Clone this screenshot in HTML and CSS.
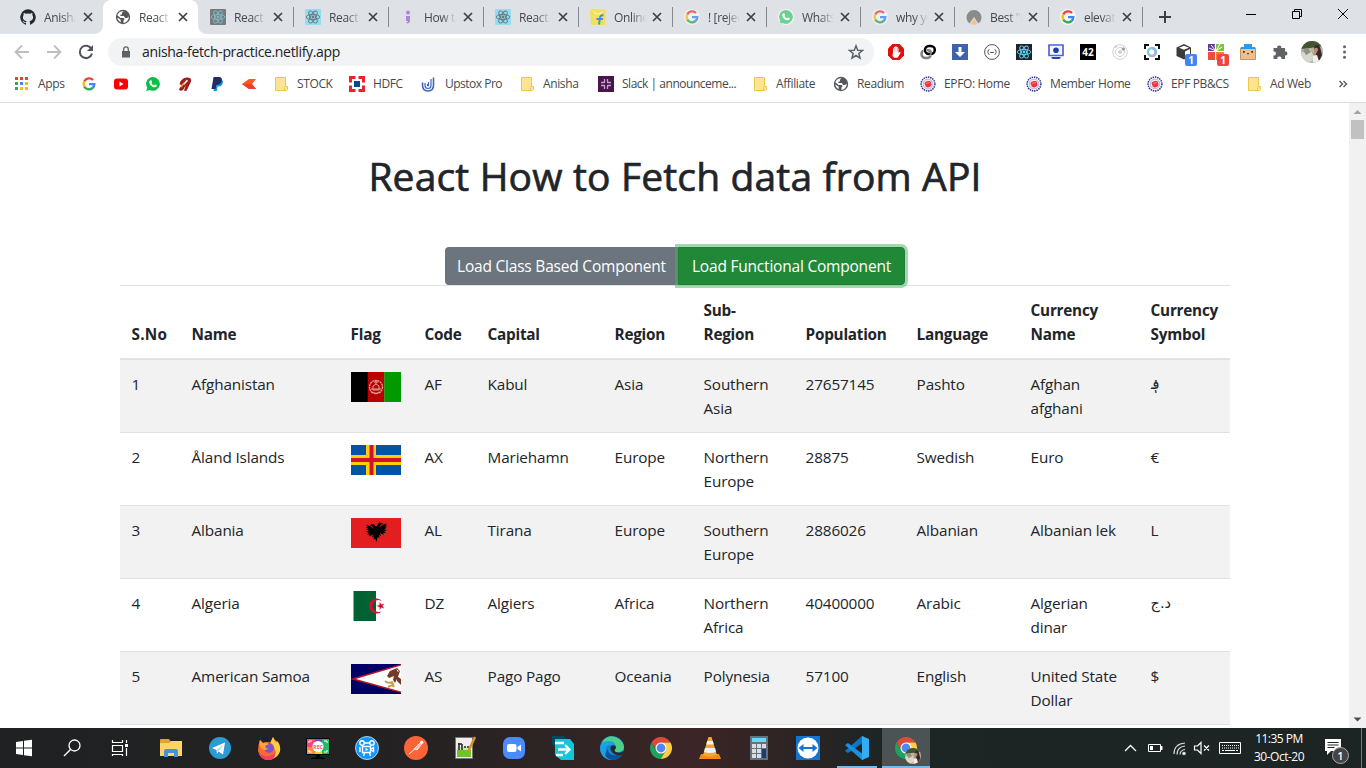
FILE: index.html
```html
<!DOCTYPE html>
<html lang="en">
<head>
<meta charset="utf-8">
<title>React How to Fetch data from API</title>
<link rel="stylesheet" href="styles.css">
</head>
<body>
<svg class="defs" width="0" height="0">
  <symbol id="google" viewBox="0 0 16 16"><g fill="none" stroke-width="2.4"><path stroke="#ea4335" d="M3.2 5.5A5.4 5.4 0 0 1 12 4"/><path stroke="#fbbc05" d="M3.3 10.6a5.3 5.3 0 0 1-.1-5.1"/><path stroke="#34a853" d="M11.6 12A5.4 5.4 0 0 1 3.3 10.6"/><path stroke="#4285f4" d="M8 8.1h5.3a5.3 5.3 0 0 1-1.8 4"/></g></symbol>
  <symbol id="react" viewBox="0 0 16 16"><g fill="none" stroke="currentColor" stroke-width=".9"><ellipse cx="8" cy="8" rx="6.8" ry="2.6"/><ellipse cx="8" cy="8" rx="6.8" ry="2.6" transform="rotate(60 8 8)"/><ellipse cx="8" cy="8" rx="6.8" ry="2.6" transform="rotate(120 8 8)"/></g><circle cx="8" cy="8" r="1.400" fill="currentColor"/></symbol>
  <symbol id="globe" viewBox="0 0 16 16"><circle cx="8" cy="8" r="7.200" fill="#54585c"/><path fill="#fff" d="M8.600 2.200 7 3.800v1.700H5.400v1.400h3.500l1.200 2.200H12l1.800-1.600c0 4-3 6.400-5.400 6.400v-2.200l1.300-1.600L8.500 8.900H5.600L2.300 6.200C3.100 3.700 5.400 2 8.600 2.200zM2.400 8.600l3.300 2.200v2.500c-2-.9-3.200-2.700-3.300-4.700z"/></symbol>
  <symbol id="whatsapp" viewBox="0 0 16 16"><path fill="currentColor" d="M8 1a6.900 6.900 0 1 1-3.300 13L1.200 15l1-3.400A6.900 6.900 0 0 1 8 1z"/><path fill="#fff" d="M5.600 4.300c.6-.3.900 0 1.400 1.400.2.500-.5.900-.6 1.200.6 1.200 1.500 2 2.700 2.500.5-.2.800-1.100 1.300-.9l1.400.8c.3.900-.8 2-1.800 2-3 0-6-3-5.800-5.400.1-.7.700-1.300 1.400-1.600z"/></symbol>
  <symbol id="folder" viewBox="0 0 16 16"><path d="M2.500 1.500h10v9h2v3l-1 1h-11z" fill="#fde492" stroke="#ecc74c"/><path d="M11.500 14v-2.500l1-1" fill="none" stroke="#ecc74c"/></symbol>
  <symbol id="seal" viewBox="0 0 16 16"><circle cx="8" cy="8" r="6.900" fill="#fff" stroke="#26358c" stroke-width="1.500" stroke-dasharray="1.500 .8"/><circle cx="8" cy="8" r="4.900" fill="#fbe3e6" stroke="#929cd4" stroke-width=".7"/><path d="M4.500 7c1-2 5-3 6.500-1l.5 3c-1 2.500-5 3.500-6 1z" fill="#ee3342"/><path d="m6 7.500 4-1" stroke="#f6a5ad" stroke-width=".7"/></symbol>
  <symbol id="close" viewBox="0 0 10 10"><path d="m1 1 8 8M9 1 1 9" stroke="#3c4043" stroke-width="1.700"/></symbol>
  <symbol id="chrome" viewBox="0 0 24 24"><path fill="#de4a3c" d="M2.500 6.500A11 11 0 0 1 21.500 6.500H12l-4.500 8z"/><path fill="#1da260" d="m2.500 6.500 4.700 8.300L12 17.500l4.500-2.700L11.800 23A11 11 0 0 1 2.500 6.500z"/><path fill="#ffcd45" d="M12 6.500h9.500A11 11 0 0 1 11.800 23l4.700-8.200z"/><circle cx="12" cy="12" r="5.500" fill="#fff"/><circle cx="12" cy="12" r="4.400" fill="#4a8af4"/></symbol>
</svg>

<header class="tabs">
  <div class="tab"><svg viewBox="0 0 16 16"><path fill="#24292e" d="M8 .2a8 8 0 0 0-2.500 15.500c.4.100.5-.2.500-.400v-1.500c-2 .4-2.600-.6-2.800-1.100-.2-.4-.6-.9-.9-1 .9-.2 1.400.5 1.600.900.600.900 1.500.700 2.200.500.100-.500.300-.8.500-1-1.800-.2-3.700-.9-3.700-4 0-.8.300-1.600.8-2.100-.2-.5-.300-1.300.1-2.100 0 0 .7-.2 2.200.8a7.500 7.500 0 0 1 4 0c1.500-1 2.200-.8 2.200-.8.400.8.200 1.600.100 2.100.5.600.8 1.300.8 2.100 0 3.100-1.900 3.800-3.700 4 .300.300.600.8.600 1.500v1.700c0 .2.100.5.5.4A8 8 0 0 0 8 .2z"/></svg><span>Anisha</span><svg class="x"><use href="#close"/></svg></div>
  <div class="tab active"><svg><use href="#globe"/></svg><span>React A</span><svg class="x"><use href="#close"/></svg></div>
  <div class="tab nosep"><svg class="react-gray"><use href="#react"/></svg><span>React -</span><svg class="x"><use href="#close"/></svg></div>
  <div class="tab"><svg class="react-blue"><use href="#react"/></svg><span>React |</span><svg class="x"><use href="#close"/></svg></div>
  <div class="tab"><svg viewBox="0 0 16 16"><circle cx="8" cy="3.500" r="1.900" fill="#b083d6"/><path d="M6 7h4v4.500c0 2-1 3-3.500 3v-1.300c1 0 1.400-.5 1.400-1.200H6z" fill="#b083d6"/></svg><span>How to</span><svg class="x"><use href="#close"/></svg></div>
  <div class="tab"><svg class="react-blue"><use href="#react"/></svg><span>React |</span><svg class="x"><use href="#close"/></svg></div>
  <div class="tab narrow"><svg viewBox="0 0 16 16"><path fill="#f2df5c" d="M0 2 1 0l14 .500L16 2l-1 14H1z"/><path d="M3.500 2.500Q5 5 8 5t4.500-2.500" fill="none" stroke="#fff8b0" stroke-width="1.200"/><path d="M13.500 6.300c-2.500-.5-3.300.7-3.600 3L9 15.500M6.500 10h6.500" fill="none" stroke="#4a90d8" stroke-width="2"/></svg><span>Online</span><svg class="x"><use href="#close"/></svg></div>
  <div class="tab narrow"><svg class="disc dim"><use href="#google"/></svg><span>! [rejec</span><svg class="x"><use href="#close"/></svg></div>
  <div class="tab narrow"><svg class="disc wa-dim"><use href="#whatsapp"/></svg><span>Whats</span><svg class="x"><use href="#close"/></svg></div>
  <div class="tab narrow"><svg class="disc dim"><use href="#google"/></svg><span>why yo</span><svg class="x"><use href="#close"/></svg></div>
  <div class="tab narrow"><svg viewBox="0 0 16 16"><path fill="#8b8b8b" d="M3.500 14.500a7.500 7.500 0 1 1 9 0L8 8z"/><path fill="#f0c48f" d="m8 9 3.500 5.800q-3.500 1.700-7 0z"/></svg><span>Best "F</span><svg class="x"><use href="#close"/></svg></div>
  <div class="tab narrow last"><svg class="disc"><use href="#google"/></svg><span>elevate</span><svg class="x"><use href="#close"/></svg></div>
  <svg class="plus" viewBox="0 0 14 14"><path d="M7 1v12M1 7h12" stroke="#3c4043" stroke-width="2"/></svg>
  <div class="window">
    <svg viewBox="0 0 12 12"><path d="M1 6.500h10" stroke="#000"/></svg>
    <svg viewBox="0 0 12 12"><path d="M1.500 3.500h7v7h-7zM3.500 3.500v-2h7v7h-2" fill="none" stroke="#000"/></svg>
    <svg viewBox="0 0 12 12"><path d="m1 1 10 10M11 1 1 11" stroke="#000"/></svg>
  </div>
</header>

<nav class="toolbar">
  <svg viewBox="0 0 16 16"><path d="M15 8H2M8 1.500 1.500 8 8 14.500" fill="none" stroke="#bcbec1" stroke-width="1.800"/></svg>
  <svg viewBox="0 0 16 16"><path d="M1 8h13M8 1.500 14.500 8 8 14.500" fill="none" stroke="#bcbec1" stroke-width="1.800"/></svg>
  <svg viewBox="0 0 16 16"><path d="M13.500 5A6.200 6.200 0 1 0 14 9.500" fill="none" stroke="#505357" stroke-width="2"/><path d="M15 1v6H9z" fill="#505357"/></svg>
  <div class="omnibox">
    <svg class="lock" viewBox="0 0 10 12"><path d="M1 5h8v6.500H1z" fill="#5f6368"/><path d="M2.700 5V3.200a2.300 2.300 0 0 1 4.600 0V5" fill="none" stroke="#5f6368" stroke-width="1.300"/></svg>
    <span class="url">anisha-fetch-practice.netlify.app</span>
    <svg class="star" viewBox="0 0 16 16"><path d="m8 1.800 1.700 4.400 4.700.3-3.600 3 1.200 4.600-4-2.600-4 2.600 1.200-4.600-3.600-3 4.700-.3z" fill="none" stroke="#5f6368" stroke-width="1.500"/></svg>
  </div>
  <div class="extensions">
    <svg viewBox="0 0 16 16"><path fill="#e1100c" d="M4.500 0h7L16 4.500v7L11.500 16h-7L0 11.500v-7z"/><path fill="#fff" d="M5 8V4.300h1V3h1.200v-.8h1.300V3h1.200v1.200h.8V9l1.500-1.200.7.700-2 3.500-1.200 1.700H6L4.500 12z"/><path d="M6.300 4v3.500M8 3.500v4M9.500 4v3.500" stroke="#e1100c" stroke-width=".3"/></svg>
    <svg viewBox="0 0 16 16" fill="none"><rect x="1.500" y="6" width="9.500" height="8" rx="4" stroke="#808080" stroke-width="2.500"/><rect x="5" y="2" width="9.800" height="8" rx="4" stroke="#fff" stroke-width="3.600"/><rect x="5" y="2" width="9.800" height="8" rx="4" stroke="#000" stroke-width="2.500"/><path d="M8.500 6.500H10q1.500 1.500.5 4.500" stroke="#808080" stroke-width="2"/></svg>
    <svg viewBox="0 0 16 16"><path fill="#3f62ad" d="M0 0h16v16H0z"/><path fill="#fff" d="M6.500 3h3v5H13l-5 5-5-5h3.500z"/></svg>
    <svg viewBox="0 0 16 16"><circle cx="8" cy="8" r="7.400" fill="#fff" stroke="#555"/><path d="M5.500 5.500Q4 5.500 4.300 7L3.500 8l.8 1q-.3 1.500 1.200 1.500M10.500 5.500q1.500 0 1.200 1.500l.8 1-.8 1q.3 1.500-1.200 1.500M6 8.500h4" fill="none" stroke="#555" stroke-width=".9" stroke-dasharray="none"/></svg>
    <svg class="react-ext"><use href="#react"/></svg>
    <svg viewBox="0 0 16 16"><path d="M1 1h14v10.500H1z" fill="#f5f6ff" stroke="#5560dc" stroke-width="1.700"/><circle cx="8" cy="6.300" r="2.800" fill="#1c3fa5"/><path d="M3.500 13h9v1.500l-2 .500h-5l-2-.5z" fill="#2542a8"/></svg>
    <span class="forty-two">42</span>
    <svg viewBox="0 0 16 16" fill="none" stroke="#d0d0d0"><circle cx="8" cy="8" r="7.300"/><circle cx="8" cy="8" r="4.500"/><circle cx="8" cy="8" r="1.500" fill="#d0d0d0"/><circle cx="11.300" cy="5" r="1.200" fill="#999" stroke="#999"/><circle cx="3.800" cy="2.500" r=".8" fill="#aaa"/></svg>
    <svg viewBox="0 0 16 16" fill="none"><path d="M1 5V1h4M11 1h4v4M15 11v4h-4M5 15H1v-4" stroke="#111" stroke-width="2"/><circle cx="8" cy="8" r="4" stroke="#7fd0c9" stroke-width="2.400"/><path d="M8 4a4 4 0 0 1 3 6" stroke="#8fb5e5" stroke-width="2.400"/><path d="M11 10.500a4 4 0 0 1-5 1" stroke="#c3a7e2" stroke-width="2.400"/></svg>
    <div class="badged"><svg viewBox="0 0 16 16"><path d="M.5 3.500 8 0l7 3.500v8.500L8 15.500.5 12z" fill="#3c3c3c"/><path d="M3 3.700 8 1.700l5 2-5 2z" fill="#fff"/><path d="m9 7.500 5-2.500v6.500L9 14z" fill="#fff"/></svg><b>1</b></div>
    <div class="badged red"><svg viewBox="0 0 16 16"><path fill="#6237a0" d="M0 0h7v7H0z"/><path fill="#7fc241" d="M8 0h8v7H8z"/><path fill="#ee4b41" d="M0 8h7v8H0z"/><path fill="#e88237" d="M8 8h8v8H8z"/><path d="M8 7 3 1M8 7 1 4M8 7l-1-6M8 7l6-4M8 7l4-7" stroke="#fff"/></svg><b>1</b></div>
    <svg viewBox="0 0 16 16"><path fill="#edbe8e" stroke="#c39566" d="M.5 4h15v11.500H.5z"/><path fill="#2999f3" d="M4 0h8v3h3v2H1V3h3z"/><path d="M3 7h1.700v1.700H3zM11.300 7H13v1.700h-1.700z" fill="#333"/><path d="m7 9.300 1 .7 1-.7" stroke="#333" fill="none"/></svg>
    <svg viewBox="0 0 16 16"><path fill="#5f6368" d="M1.500 4h3.800a2 2 0 1 1 3.900 0H13v3.600a2 2 0 1 1 0 3.900V15H9.300a2 2 0 1 0-3.900 0H1.500v-3.600a2 2 0 1 0 0-3.900z"/></svg>
    <svg class="avatar"><use href="#photo"/></svg>
    <svg viewBox="0 0 16 16" fill="#5f6368"><circle cx="8.500" cy="2.800" r="1.500"/><circle cx="8.500" cy="8" r="1.500"/><circle cx="8.500" cy="13.200" r="1.500"/></svg>
  </div>
</nav>

<nav class="bookmarks">
  <a><svg viewBox="0 0 16 16"><path fill="#ea4335" d="M1 1h3v3H1zM6 1h3v3H6zM11 1h3v3h-3z"/><path fill="#34a853" d="M1 6h3v3H1zM1 11h3v3H1z"/><path fill="#4285f4" d="M6 6h3v3H6z"/><path fill="#fbbc05" d="M11 6h3v3h-3zM6 11h3v3H6zM11 11h3v3h-3z"/></svg><span>Apps</span></a>
  <a><svg><use href="#google"/></svg></a>
  <a><svg viewBox="0 0 16 16"><rect x="1" y="2.500" width="14" height="11" rx="3" fill="#f00"/><path fill="#fff" d="m6.500 5.500 4 2.500-4 2.500z"/></svg></a>
  <a class="wa"><svg><use href="#whatsapp"/></svg></a>
  <a><svg viewBox="0 0 16 16"><path d="M2.500 8Q4 2 10 1.500q5 0 4 4L10 14q-1 1.500-3 .5L9 9 6 14q-2 1.500-4 0 0-2 3-4.500z" fill="#9c1c1d"/><path d="m5 9 5-5.500 1 1.500L7 9z" fill="#fff"/><path d="m4 11 3-4" stroke="#f39a1d" stroke-width="1.500"/></svg></a>
  <a><svg viewBox="0 0 16 16"><path fill="#179bd7" d="M6 4h7q2 1 0 5-2 2-4.500 1.500L8 15H4.500z"/><path fill="#222d65" d="M4.500 1h6q3.500.500 2 5-1 3-5 2.800L6.500 13h-4z"/></svg></a>
  <a><svg viewBox="0 0 16 16"><path fill="#ff5722" d="M1 8 8 3h7l-4 5 4 5H8z"/><path fill="#e8432a" d="m1 8 10 0 4 5H8z"/></svg></a>
  <a><svg><use href="#folder"/></svg><span>STOCK</span></a>
  <a><svg viewBox="0 0 16 16"><path fill="#ed232a" d="M0 0h16v16H0z"/><path fill="#fff" d="M6.500 0h3v16h-3zM0 6.500h16v3H0zM3 3h10v10H3z"/><path fill="#004c8f" d="M5 5h6v6H5z"/></svg><span>HDFC</span></a>
  <a><svg viewBox="0 0 16 16" fill="none" stroke="#3f66bd"><path d="M1.500 6.500V9q0 6 5.500 6t5.500-6V1.500" stroke-width="1.600"/><path d="M4 7v2.500q0 3 3 3t3-3V3M6.500 8v1.500q.5 1 1 0V6" stroke-width="1.200"/></svg><span class="upstox">Upstox Pro</span></a>
  <a><svg><use href="#folder"/></svg><span>Anisha</span></a>
  <a><svg viewBox="0 0 16 16"><path fill="#4a154b" d="M0 0h16v16H0z"/><path d="M6.500 3v4M9.500 9v4M3 9.500h4M9 6.500h4M9.500 3v3M6.500 10v3M3 6.500h3M10 9.500h3" stroke="#c3a3c5" stroke-width="1.300"/></svg><span class="slack">Slack | announceme...</span></a>
  <a><svg><use href="#folder"/></svg><span>Affiliate</span></a>
  <a><svg><use href="#globe"/></svg><span>Readium</span></a>
  <a><svg><use href="#seal"/></svg><span>EPFO: Home</span></a>
  <a><svg><use href="#seal"/></svg><span>Member Home</span></a>
  <a><svg><use href="#seal"/></svg><span class="cs">EPF PB&amp;CS</span></a>
  <a><svg><use href="#folder"/></svg><span>Ad Web</span></a>
  <svg viewBox="0 0 10 10"><path d="m1.500 2 3 3-3 3M5.500 2l3 3-3 3" fill="none" stroke="#5f6368" stroke-width="1.500"/></svg>
</nav>

<div class="viewport">
  <main>
    <h1>React How to Fetch data from API</h1>
    <div class="btn-group"><button class="btn-secondary">Load Class Based Component</button><button class="btn-success">Load Functional Component</button></div>
    <table>
      <colgroup><col class="c1"><col class="c2"><col class="c3"><col class="c4"><col class="c5"><col class="c6"><col class="c7"><col class="c8"><col class="c9"><col class="c10"><col class="c11"></colgroup>
      <thead><tr><th>S.No</th><th>Name</th><th>Flag</th><th>Code</th><th>Capital</th><th>Region</th><th>Sub-<br>Region</th><th>Population</th><th>Language</th><th>Currency<br>Name</th><th>Currency<br>Symbol</th></tr></thead>
      <tbody>
        <tr><td>1</td><td>Afghanistan</td><td><svg viewBox="0 0 50 30"><path d="M0 0h17v30H0z"/><path fill="#b00" d="M16.700 0H33.500v30H16.700z"/><path fill="#090" d="M33.300 0H50v30H33.300z"/><g fill="none" stroke="#e0a39c"><circle cx="25" cy="15" r="6.500" stroke-width="1.300" stroke-dasharray="2 .6"/><path d="M22 18v-4l3-2 3 2v4zM20 20q5 3 10 0M23 10h4M25 8v4M20 17h10"/></g></svg></td><td>AF</td><td>Kabul</td><td>Asia</td><td>Southern<br>Asia</td><td>27657145</td><td>Pashto</td><td>Afghan<br>afghani</td><td class="ar">؋</td></tr>
        <tr><td>2</td><td>Åland Islands</td><td><svg viewBox="0 0 50 30"><path fill="#0053a5" d="M0 0h50v30H0z"/><path stroke="#ffce00" stroke-width="10" d="M20 0v30M0 15h50"/><path stroke="#d21034" stroke-width="4" d="M20.500 0v30M0 15h50"/></svg></td><td>AX</td><td>Mariehamn</td><td>Europe</td><td>Northern<br>Europe</td><td>28875</td><td>Swedish</td><td>Euro</td><td>€</td></tr>
        <tr><td>3</td><td>Albania</td><td><svg viewBox="0 0 50 30"><path fill="#e41e20" d="M0 0h50v30H0z"/><path d="m25 9-2-3-3 .5-1 1 2 .5 1.500 3-3.500-3-4-1 2 2-2 0 2 2h-2l3 2-3 .5 3 1.500-2 1.500 3 0-1 2 4-2-1 3 2-1-.5 3 2-1 .5 3.500L25 24l1-1.500.500-3.500 2 1-.500-3 2 1-1-3 4 2-1-2h3l-2-1.500 3-1.500-3-.5 3-2h-2l2-2h-2l2-2-4 1-3.500 3 1.500-3 2-.5-1-1-3-.5z"/></svg></td><td>AL</td><td>Tirana</td><td>Europe</td><td>Southern<br>Europe</td><td>2886026</td><td>Albanian</td><td>Albanian lek</td><td>L</td></tr>
        <tr><td>4</td><td>Algeria</td><td><svg viewBox="0 0 50 30"><path fill="#fff" d="M2.500 0h45v30h-45z"/><path fill="#006233" d="M2.500 0H25v30H2.500z"/><path fill="#d21034" d="M31.500 10.500a7.500 7.500 0 1 0 0 9 6 6 0 1 1 0-9z"/><path fill="#d21034" d="m28.600 11-.1 3-3.200 1 3.200 1 .1 3 1.800-2.400 2.900.8-1.800-2.400 1.800-2.400-2.900.8z"/></svg></td><td>DZ</td><td>Algiers</td><td>Africa</td><td>Northern<br>Africa</td><td>40400000</td><td>Arabic</td><td>Algerian<br>dinar</td><td class="ar">د.ج</td></tr>
        <tr><td>5</td><td>American Samoa</td><td><svg viewBox="0 0 50 30"><path fill="#006" d="M0 0h50v30H0z"/><path fill="#fff" stroke="#bd1021" stroke-width="1.500" d="M52 .2 2 15l50 13.800z"/><path fill="#733a25" d="m46 4-7 3-3 5 2 2 5-2-1 4 2 3 2-4 2-5 1-3z"/><path d="M34 17q3 3 8 1M37 23l6-3M40 18l3 5" stroke="#c3a04a" fill="none" stroke-width="2"/><path d="m45 5 3 2-1 1z" fill="#fff"/><path fill="#733a25" d="m46 12 4 3v6l-4-4z"/></svg></td><td>AS</td><td>Pago Pago</td><td>Oceania</td><td>Polynesia</td><td>57100</td><td>English</td><td>United State<br>Dollar</td><td>$</td></tr>
      </tbody>
    </table>
  </main>
  <aside class="scrollbar"><svg viewBox="0 0 17 17"><path d="m4.500 11 4-4 4 4z" fill="#a3a3a3"/></svg><i></i><svg class="down" viewBox="0 0 17 17"><path d="m4.500 6.500 4 4 4-4z" fill="#505050"/></svg></aside>
</div>

<footer class="taskbar">
  <div class="system">
    <svg viewBox="0 0 24 24"><path fill="#fff" d="m4 6 7-1v6.500H4zM12 4.800l8-1v7.700h-8zM4 12.500h7V19l-7-1zM12 12.500h8v7.700l-8-1z"/></svg>
    <svg viewBox="0 0 24 24"><circle cx="14.500" cy="9.500" r="5.500" fill="none" stroke="#fff" stroke-width="1.300"/><path d="m10.500 13.500-6.500 6.500" stroke="#fff" stroke-width="1.500"/></svg>
    <svg viewBox="0 0 24 24"><path d="M4.500 4v2.500h10V4M4.500 9.500h10v6h-10zM4.500 20v-1.500h10V20M18.500 4v3M18.500 12v8" fill="none" stroke="#fff" stroke-width="1.200"/><path fill="#fff" d="M17 8h3v3h-3z"/></svg>
  </div>
  <div class="apps">
    <div><svg viewBox="0 0 24 24"><path fill="#dda52c" d="M1 4q0-1 1-1h8l2 3h11v14H1z"/><path fill="#ffd665" d="M1 7h9l2-2h11v15H1z"/><path fill="#4594db" d="M5 21v-6q0-2 2-2h10q2 0 2 2v6h-4v-4h-6v4z"/></svg></div>
    <div><svg viewBox="0 0 24 24"><circle cx="12" cy="12" r="11" fill="#2c9bd3"/><path fill="#fff" d="m4 12 13-5.500-2 12-4.500-3L9 18l-.5-4z"/><path fill="#b8d9ea" d="m8.500 14 7-5.500-5 7z"/></svg></div>
    <div><svg viewBox="0 0 24 24"><path fill="#ff6a33" d="m3 4 3 3q4-2 8 0l2-6q2 4 5 5 3 7 1 11-4 7-10 7-9 0-11-9Q1 9 3 4z"/><path fill="#ffcf3b" d="M16 1q1 4 4 6 1-2 0-3 6 9 1 15-2 3-5 3 4-4 2-8-1-5-5-7z"/><path fill="#ff3c5f" d="M1.300 14q3 7 10 6 5-1 7-4 0 8-7 8-8 0-10-10z"/><circle cx="12" cy="12" r="5" fill="#8352cf"/><path fill="#ffa436" d="m3 4 3 3q4-1 6 1l-4 2q0 2 3 3-3 2-6 0-4-4-2-9z"/></svg></div>
    <div><svg viewBox="0 0 24 24"><path fill="#050505" d="M0 2h24v17H0zM10 19h4v2l5 1v1H5v-1l5-1z"/><path fill="#f4447a" d="M1 3h8v8H1z"/><path fill="#6d51d4" d="M9 3h7v8H9z"/><path fill="#ff8a3c" d="M1 11h9v7H1z"/><path fill="#f9c92f" d="M9 11h7v7H9z"/><path fill="#25b968" d="M16 3h7v15h-7z"/><circle cx="12" cy="10.500" r="5.500" fill="#fff"/><path d="M3 7V5h3M18 5h3v2M3 14v2h3M18 16h3v-2" fill="none" stroke="#fff"/><text x="12" y="12.500" text-anchor="middle" font-size="5" font-weight="700" fill="#ef5844">REC</text></svg></div>
    <div><svg viewBox="0 0 24 24"><circle cx="12" cy="12" r="11.500" fill="#1496f8" stroke="#d5ebff" stroke-width=".8"/><g fill="none" stroke="#fff" stroke-width="1.400"><circle cx="7" cy="7" r="2.200"/><circle cx="17" cy="7" r="2.200"/><path d="M9 7h6M7.500 10.500h8v6h-8zM5 11v5M16 13l2.500-1.500v4L16 14M9.500 17l-1 3M14.500 17l1 3"/></g><path fill="#fff" d="m10.500 12 3 1.500-3 1.500z"/></svg></div>
    <div><svg viewBox="0 0 24 24"><circle cx="12" cy="12" r="12" fill="#ff6338"/><path d="m5 18 8-7" stroke="#fff"/><path d="m10 13 6-6 1.500 1.500L13 14z" fill="#ffbba5" stroke="#fff" stroke-width=".7"/><circle cx="17.700" cy="6.300" r="1.700" fill="#fff"/></svg></div>
    <div><svg viewBox="0 0 24 24"><path fill="#eee" stroke="#777" d="M2.500 1.500h17v21h-17z"/><path fill="#6ec52a" d="M4 13h14v8H4z"/><path fill="#c7eda4" d="M4 11h14v3H4z"/><path d="M6 7v7M9 8v6M5 8h4M11 11h2M14 11h2" stroke="#222" stroke-width="1.500"/><path d="m22 1-7 15" stroke="#d99024" stroke-width="2.500"/></svg></div>
    <div><svg viewBox="0 0 24 24"><rect x="1" y="1" width="22" height="22" rx="7" fill="#4a8cff"/><rect x="5" y="8" width="9.500" height="8" rx="2" fill="#fff"/><path d="m15.500 11 3.500-2.500v7L15.500 13z" fill="#fff"/></svg></div>
    <div><svg viewBox="0 0 24 24"><path fill="#04485c" d="M1 0h12l3 4-10 9-5-5z"/><path fill="#14c6dc" d="M4 3h15l4 5v16H10l-6-5z"/><path d="M4 7h9M7 13.500h11M14 9l4.500 4.500L14 18M5 19h7" stroke="#fff" stroke-width="2.300" fill="none"/></svg></div>
    <div><svg viewBox="0 0 24 24"><circle cx="12" cy="12" r="12" fill="#1684d1"/><path fill="#4bd087" d="M3 4.500Q10-3 19 2.800q6 5 4.800 10Q22 17 16 16q-3-1 0-4-1-5-8-5-4 0-6 1z"/><path fill="#1ba2e2" d="M0 12Q1 4 10 5q6 1 6 7-1-4-6-3-10 2 3 15Q1 24 0 12z"/><path fill="#0a519c" d="M8 13q-1 5 5 6 4 1 9-2-3 7-10 7-11-3-4-11z"/><path fill="#272b2b" d="M11 10q5-2 5 2-3 3 0 4 4 2 7-1l1 1-1 3q-5 1-9-1-5-4-3-8z"/></svg></div>
    <div><svg><use href="#chrome"/></svg></div>
    <div><svg viewBox="0 0 24 24"><path fill="#f58b10" d="M3 18h18l2 5H1z"/><path fill="#f7a52e" d="M10.500 1h3L19 19q-7 3-14 0z"/><path fill="#f1f1f1" d="m9.200 5-1 3.500h7.600l-1-3.500zM7 12l-1 4q6 2 12 0l-1-4z"/></svg></div>
    <div><svg viewBox="0 0 24 24"><path fill="#65717b" d="M3 0h18v24H3z"/><path fill="#66d9f5" d="M5 2h14v4H5z"/><path d="M5 10h9M5 15h9M5 20h9" stroke="#d8dde0" stroke-width="4" stroke-dasharray="4 1"/><path stroke="#d8dde0" stroke-width="4" d="M15 10h4"/><path fill="#173e75" d="M15 13h4v9h-4z"/></svg></div>
    <div><svg viewBox="0 0 24 24"><path fill="#1375d1" d="M0 0h24v24H0z"/><circle cx="12" cy="12" r="10.500" fill="#fff"/><path fill="#1375d1" d="m2.500 12 5-4v3h9V8l5 4-5 4v-3h-9v3z"/></svg></div>
    <div class="running"><svg viewBox="0 0 24 24"><path fill="#0b78c4" d="m17 0 2 1v5L3 17l-3-2z"/><path fill="#1991dd" d="m0 9 3-2 16 12v4l-2 1z"/><path fill="#35adf2" d="m17 0 7 3v18l-7 3z"/></svg></div>
    <div class="current"><svg><use href="#chrome"/></svg><svg class="mini"><use href="#photo"/></svg></div>
  </div>
  <div class="tray">
    <svg viewBox="0 0 24 24"><path d="m7 15 5.500-5.500L18 15" stroke="#fff" stroke-width="1.300" fill="none"/></svg>
    <svg viewBox="0 0 24 24"><path d="M6.500 8.500h12v7h-12z" fill="none" stroke="#fff"/><path fill="#fff" d="M8 10h3v4H8zM19 10h1.500v4H19z"/></svg>
    <svg viewBox="0 0 24 24" fill="none" stroke="#ddd" stroke-width="1.200"><path d="M8 18Q8 8 19 7M11 18.500q0-7.500 8-8.500M14 18.500q0-4 5-5"/><circle cx="18" cy="17.500" r="1.200" fill="#fff"/></svg>
    <svg viewBox="0 0 24 24" fill="none" stroke="#fff" stroke-width="1.200"><path d="M4.500 10h3L11 6.500v11L7.500 14h-3zM14 9.500l5 5M19 9.500l-5 5"/></svg>
    <svg class="keyboard" viewBox="0 0 24 14" fill="none" stroke="#fff"><path d="M1.500 1.500h21v11h-21z"/><path d="M4 4.500h17M4 7h17" stroke-dasharray="1 1"/><path d="M4 9.500h2M7 9.500h10M18 9.500h2"/></svg>
    <div class="clock">11:35 PM<br>30-Oct-20</div>
    <div class="notice"><svg viewBox="0 0 20 20"><path fill="#fff" d="M2 1h16v12H8l-4 4v-4H2z"/><path d="M4.500 4.500h11M4.500 7h11M4.500 9.500h7" stroke="#222"/></svg><b>1</b></div>
  </div>
</footer>
<svg class="defs" width="0" height="0"><defs><clipPath id="round"><circle cx="11" cy="11" r="11"/></clipPath></defs>
<symbol id="photo" viewBox="0 0 22 22"><g clip-path="url(#round)"><path fill="#b5b2a2" d="M0 0h22v22H0z"/><path fill="#42532f" d="M0 0h22v5L9 7 0 8z"/><path fill="#d8d5cc" d="m0 12 9-4 5 10-7 4H0z"/><path fill="#8c927f" d="m2 9 5-2 3 4-5 3z"/><path fill="#392a27" d="M13 6q3-4 6 0l2 8-3 7-3-6z"/><path fill="#c18d72" d="M14 7q3-1 3 2l-2 4-3 1z"/><path fill="#efefeb" d="m12 15 4-1 2 6-6 2z"/></g></symbol></svg>
</body>
</html>
```

FILE: styles.css
```css
* { box-sizing: border-box; }
body { margin: 0; width: 1366px; height: 768px; overflow: hidden; display: flex; flex-direction: column; background: #fff; color: #212529; font-family: "Open Sans", "Noto Sans", sans-serif; }
svg { display: block; flex: none; width: 16px; height: 16px; }
.defs { position: absolute; width: 0; height: 0; }

.tabs { height: 34px; flex: none; display: flex; padding-left: 8px; background: #dee1e6; font-size: 12px; color: #45494d; }
.tab { position: relative; width: 95px; height: 34px; padding-left: 12px; display: flex; align-items: center; gap: 8px; }
.tab.narrow { width: 94px; }
.tab span { width: 32px; overflow: hidden; white-space: nowrap; letter-spacing: -.35px; mask-image: linear-gradient(90deg, #000 55%, transparent); }
.tab .x { width: 10px; height: 10px; margin-left: -1px; }
.tab.narrow .x { margin-left: -2px; }
.tab:nth-child(n+4)::before, .tab.last::after { content: ""; position: absolute; left: 0; top: 7px; width: 1px; height: 20px; background: #85888c; }
.tab.last::after { left: auto; right: -1px; }
.tab.active { background: #fff; border-radius: 8px 8px 0 0; }
.tab.active::before, .tab.active::after { content: ""; position: absolute; bottom: 0; width: 8px; height: 8px; }
.tab.active::before { left: -8px; background: radial-gradient(circle at 0 0, transparent 7.5px, #fff 8px); }
.tab.active::after { right: -8px; background: radial-gradient(circle at 100% 0, transparent 7.5px, #fff 8px); }
.react-gray { background: #77797b; color: #7fb9c8; border-radius: 1px; }
.react-blue { background: #96dcf0; color: #66777d; border-radius: 1px; }
.react-ext { background: #20232a; color: #61dafb; }
.disc { background: #f4f5f7; border-radius: 50%; }
.dim { opacity: .75; }
.wa-dim { color: #6dd093; }
.plus { width: 14px; height: 14px; margin: 10px 0 0 16px; }
.window { display: flex; gap: 34px; margin: 8px 17px 0 auto; }
.window svg { width: 12px; height: 12px; }

.toolbar { height: 36px; flex: none; display: flex; align-items: center; gap: 16px; padding-left: 14px; }
.omnibox { width: 766px; height: 28px; margin-left: -2px; padding: 0 10px 0 13px; display: flex; align-items: center; gap: 11px; background: #f1f3f4; border-radius: 14px; }
.lock { width: 10px; height: 12px; }
.url { font-size: 14px; letter-spacing: -.34px; line-height: 20px; color: #202124; }
.star { margin-left: auto; }
.extensions { display: flex; align-items: center; gap: 16px; margin-left: -2px; }
.forty-two { width: 16px; height: 16px; background: #000; color: #fff; font: 700 10px/16px "Open Sans", sans-serif; text-align: center; }
.badged { position: relative; }
.badged b { position: absolute; left: 9px; top: 10px; width: 12px; height: 12px; border-radius: 2px; background: #4285f4; color: #fff; font: 700 10px/12px "Open Sans", sans-serif; text-align: center; }
.badged.red b { background: #ee4545; }
.avatar { width: 22px; height: 22px; margin: 0 -3px; }

.bookmarks { height: 33px; flex: none; padding: 0 0 4px 14px; border-bottom: 1px solid #dadce0; display: grid; align-items: center; grid-template-columns: 67px 32px 32px 32px 32px 32px 32px 76px 72px 98px 79px 154px 81px 87px 106px 121px 99px 92px 10px; color: #45494d; font-size: 12px; }
.bookmarks a { display: flex; align-items: center; gap: 8px; line-height: 18px; white-space: nowrap; letter-spacing: -.38px; }
.bookmarks .slack { letter-spacing: -.48px; }
.bookmarks .upstox { letter-spacing: -.5px; }
.bookmarks > svg { width: 10px; height: 10px; }
.wa { color: #0cbd49; }

.viewport { height: 625px; flex: none; display: flex; }
main { flex: 1; overflow: hidden; padding: 49px 119px 0 120px; text-align: center; }
h1 { margin: 0; font-size: 39px; font-weight: 500; line-height: 48px; letter-spacing: .16px; -webkit-text-stroke: .7px #212529; }
.btn-group { display: flex; justify-content: center; margin-top: 47px; }
.btn-group button { position: relative; height: 38px; padding: 0; border: 0; color: #fff; font: 15.500px/24px "Open Sans", sans-serif; letter-spacing: -.21px; white-space: nowrap; }
.btn-secondary { width: 233px; background: #6c757d; border-radius: 4px 0 0 4px; }
.btn-group .btn-success { width: 227px; background: #218838; border: 1px solid #1e7e34; border-radius: 0 4px 4px 0; box-shadow: 0 0 0 3px rgba(72, 180, 97, .5); }
table { width: 1110px; table-layout: fixed; border-collapse: separate; border-spacing: 0; text-align: left; font-size: 15.300px; line-height: 24px; }
.c1 { width: 60px; } .c2 { width: 159px; } .c3 { width: 74px; } .c4 { width: 63px; } .c5 { width: 127px; } .c6 { width: 89px; } .c7 { width: 102px; } .c8 { width: 111px; } .c9 { width: 114px; } .c10 { width: 120px; } .c11 { width: 91px; }
th, td { padding: 12px 0 12px 11.600px; white-space: nowrap; letter-spacing: -.15px; }
th { letter-spacing: -.25px; vertical-align: bottom; border-top: 1px solid #dee2e6; border-bottom: 2px solid #dee2e6; }
th:first-child { letter-spacing: .2px; }
td { height: 73px; vertical-align: top; border-bottom: 1px solid #dee2e6; }
tbody tr:nth-child(odd) { background: #f2f2f2; }
td svg { width: 50px; height: 30px; margin-left: .4px; }
td.ar { font-family: "DejaVu Sans", sans-serif; font-size: 14.500px; }
.scrollbar { width: 17px; background: #f1f1f1; display: flex; flex-direction: column; }
.scrollbar svg { width: 17px; height: 17px; }
.scrollbar i { width: 13px; height: 19px; margin-left: 2px; background: #c1c1c1; }
.scrollbar .down { margin-top: auto; }

.taskbar { height: 40px; flex: none; display: flex; color: #fff; background: linear-gradient(90deg, #1f2122 0, #242222 30%, #302425 42%, #3c2526 51%, #2a2424 59%, #1d2525 65%, #1d2424 100%); }
.system { display: flex; align-items: center; gap: 24px; padding-left: 12px; width: 146px; }
.taskbar svg { width: 24px; height: 24px; }
.apps { display: flex; }
.apps div { position: relative; width: 49px; height: 40px; display: flex; align-items: center; justify-content: center; }
.apps .running { background: linear-gradient(#76b9ed, #76b9ed) 5px 38px / 40px 2px no-repeat; }
.apps .current { width: 48px; margin-left: 1px; background: #4b5354; border-bottom: 2px solid #76b9ed; padding-top: 2px; }
.apps .mini { position: absolute; left: 23px; top: 20px; width: 16px; height: 16px; }
.tray { display: flex; align-items: center; margin-left: auto; padding-right: 4px; }
.tray .keyboard { width: 24px; height: 14px; margin: 0 6px 0 4px; }
.clock { width: 62px; margin-right: 4px; text-align: center; font-size: 12px; line-height: 18px; letter-spacing: -.5px; white-space: nowrap; }
.notice { position: relative; width: 48px; height: 40px; padding: 10px 0 0 9px; border-right: 1px solid #777; }
.taskbar .notice svg { width: 20px; height: 20px; }
.notice b { position: absolute; left: 18px; top: 19px; width: 17px; height: 17px; border: 1px solid #aaa; border-radius: 50%; background: #444; font: 600 11px/15px "Open Sans", sans-serif; text-align: center; }
```
